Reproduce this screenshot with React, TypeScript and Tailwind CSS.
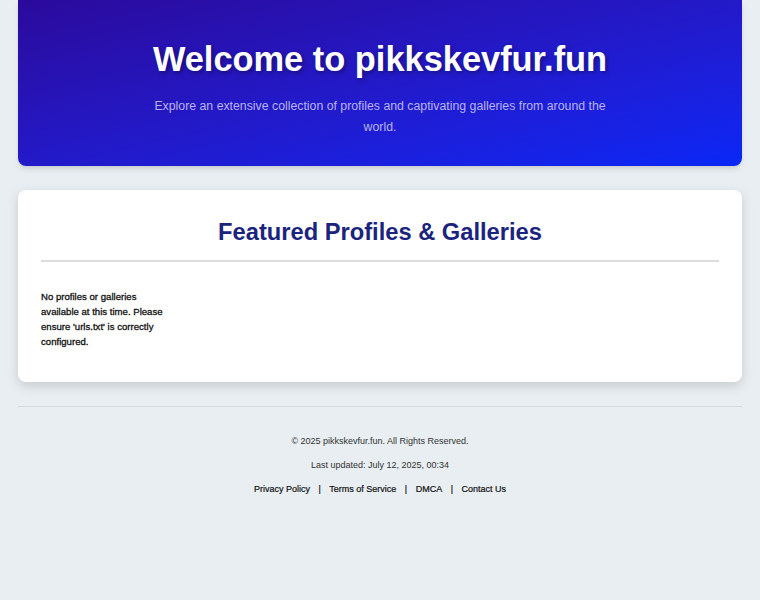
export default function App() {
  const links = ['Privacy Policy', 'Terms of Service', 'DMCA', 'Contact Us']

  return (
    <div className="min-h-[600px] bg-[#e8eef1] px-[18px] font-['Liberation_Sans',Arial,sans-serif]">
      {/* Hero */}
      <header className="rounded-b-lg bg-gradient-to-br from-[#2a0a9c] to-[#0727f6] px-6 pt-[37px] pb-[28px] text-center shadow-md">
        <h1 className="text-[34.4px] font-bold leading-[44px] text-white [text-shadow:2px_2px_4px_rgba(0,0,0,0.35)]">
          Welcome to pikkskevfur.fun
        </h1>
        <p className="mx-auto mt-[15px] max-w-[464px] text-[12.3px] leading-[21px] text-[#b9b3ef]">
          Explore an extensive collection of profiles and captivating galleries from around the world.
        </p>
      </header>

      {/* Featured */}
      <section className="mt-6 rounded-lg bg-white px-[23px] pt-[26px] pb-[33px] shadow-[0_4px_12px_rgba(0,0,0,0.15)]">
        <h2 className="pb-[12px] text-center text-[23.7px] font-bold leading-[32px] text-[#1a237e]">
          Featured Profiles &amp; Galleries
        </h2>
        <div className="h-[2px] bg-[#dcdcdc]" />
        <div className="mt-[27px] grid grid-cols-[repeat(auto-fill,minmax(130px,1fr))] gap-4">
          <p className="w-[130px] text-[9.6px] leading-[15px] text-[#111] [-webkit-text-stroke:0.3px_#111]">
            No profiles or galleries available at this time. Please ensure 'urls.txt' is correctly configured.
          </p>
        </div>
      </section>

      {/* Footer */}
      <footer className="mt-6 border-t border-[#d2d8dc] pt-[27px] text-center text-[9px] text-[#333]">
        <p className="leading-[14px]">© 2025 pikkskevfur.fun. All Rights Reserved.</p>
        <p className="mt-[10px] leading-[14px]">Last updated: July 12, 2025, 00:34</p>
        <nav className="mt-[10px] flex justify-center gap-[8.5px] leading-[14px] text-[#111] [-webkit-text-stroke:0.2px_#111]">
          {links.map((l, i) => (
            <span key={l} className="flex gap-[8.5px]">
              {i > 0 && <span>|</span>}
              <a href="#">{l}</a>
            </span>
          ))}
        </nav>
      </footer>
    </div>
  )
}
